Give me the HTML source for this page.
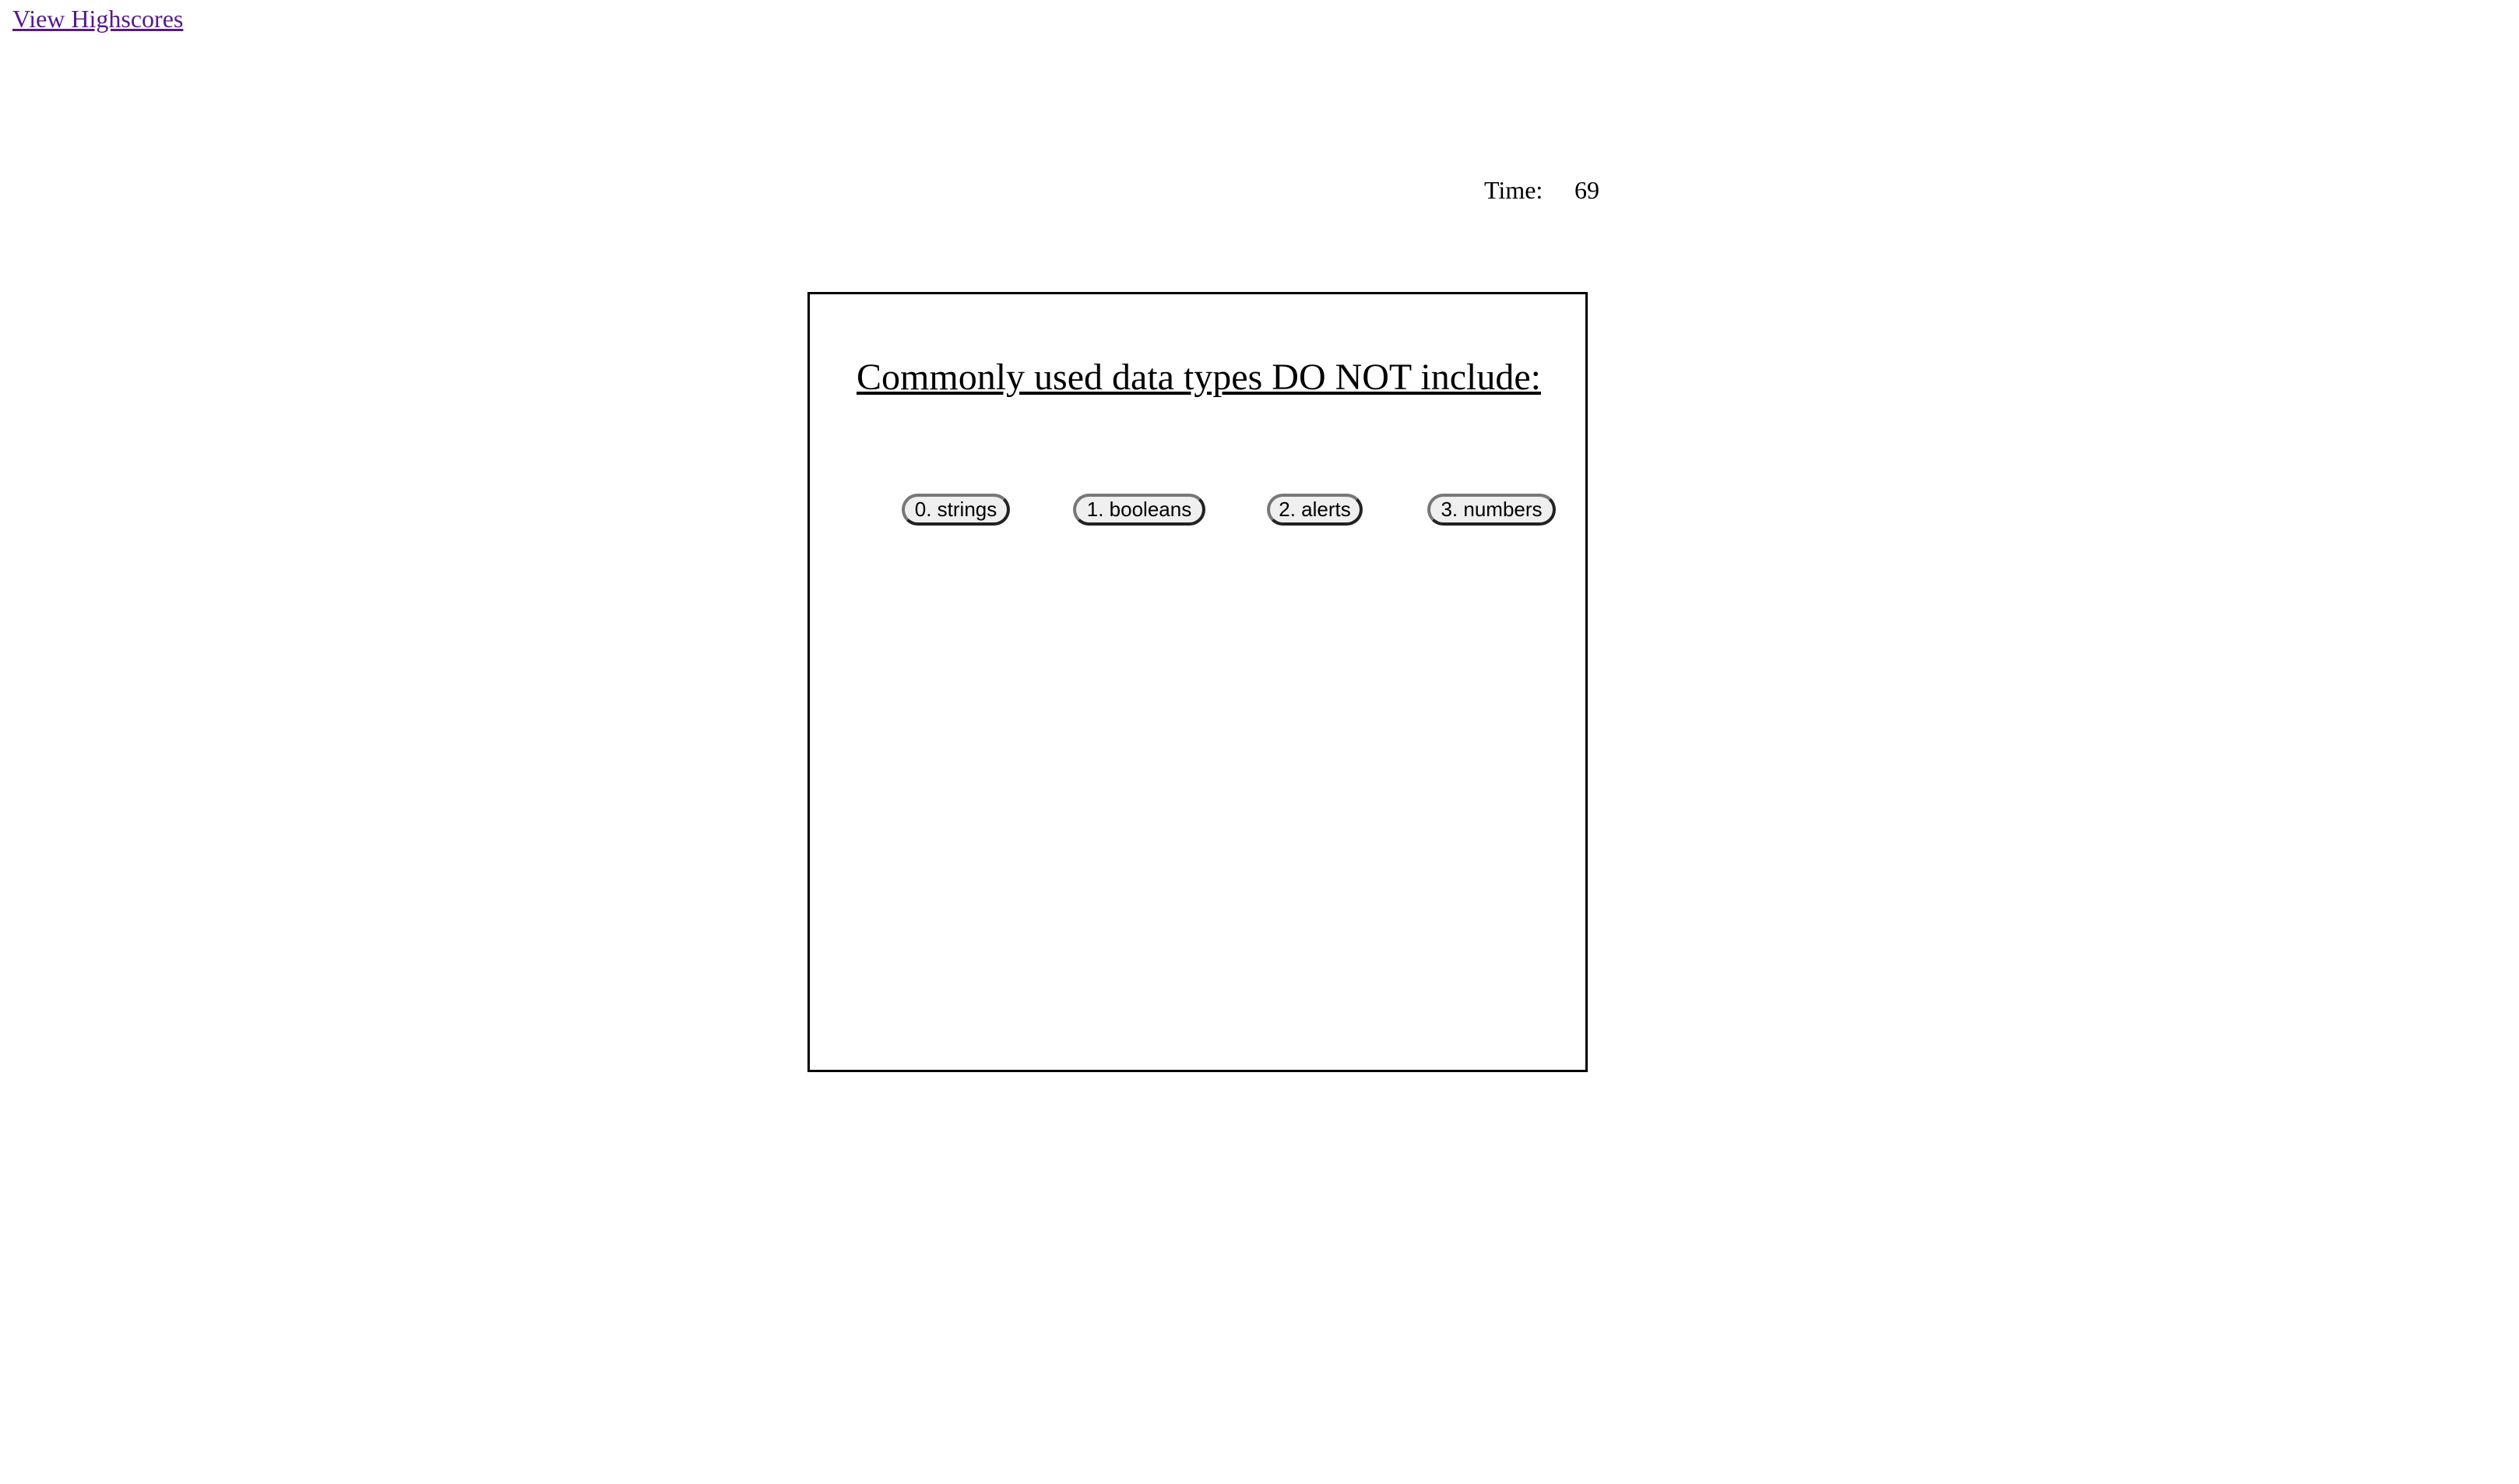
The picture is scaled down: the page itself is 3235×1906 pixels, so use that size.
<!DOCTYPE html>
<html><head><style>
body{margin:0;width:3235px;height:1906px;background:#fff;position:relative;overflow:hidden;font-family:"Liberation Serif",serif;}
a{position:absolute;left:16px;top:6px;font-size:32px;color:#551a8b;text-decoration:underline;}
.t{position:absolute;top:224px;font-size:32px;line-height:40px;}
.box{position:absolute;left:1037px;top:375px;width:996px;height:996px;border:3px solid #000;}
h2{position:absolute;left:1100px;top:455px;margin:0;font-weight:normal;font-size:48px;line-height:60px;text-decoration:underline;white-space:nowrap;}
.b{position:absolute;top:634px;height:41px;box-sizing:border-box;border:4px solid;border-color:#777 #222 #222 #777;border-radius:21px;background:#efefef;font-family:"Liberation Sans",sans-serif;font-size:26px;line-height:33px;text-align:center;}
</style></head><body>
<a href="#">View Highscores</a>
<div class="t" style="left:1906px">Time:</div>
<div class="t" style="left:2022px">69</div>
<div class="box"></div>
<h2>Commonly used data types DO NOT include:</h2>
<div class="b" style="left:1158px;width:139px">0. strings</div>
<div class="b" style="left:1378px;width:170px">1. booleans</div>
<div class="b" style="left:1627px;width:123px">2. alerts</div>
<div class="b" style="left:1833px;width:165px">3. numbers</div>
</body></html>
